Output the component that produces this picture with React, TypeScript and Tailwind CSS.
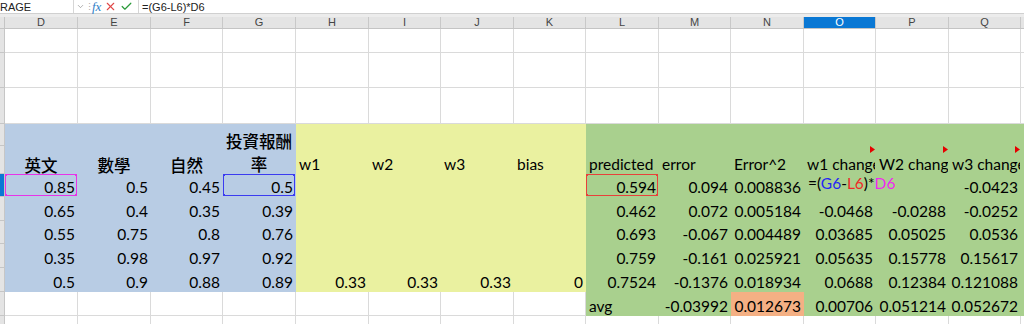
import { Check, ChevronDown, X } from "lucide-react";

type Fill = "w" | "b" | "y" | "g" | "o";
type Cell = {
  t?: string;
  a?: "l" | "r" | "c";
  f: Fill;
  cjk?: boolean;
  wrap?: boolean;
  box?: "m" | "b" | "r";
  tri?: boolean;
  formula?: boolean;
};
type Row = { h: string; sel?: boolean; cells: Cell[] };

const COLS = ["D", "E", "F", "G", "H", "I", "J", "K", "L", "M", "N", "O", "P", "Q"];
const W = [
  "w-[73px]", "w-[73px]", "w-[72px]", "w-[73px]", "w-[73px]", "w-[72px]", "w-[73px]",
  "w-[72px]", "w-[73px]", "w-[72px]", "w-[73px]", "w-[72px]", "w-[73px]", "w-[72px]",
];

const FILL: Record<Fill, string> = {
  w: "bg-white border-[#dadada]",
  b: "bg-[#b8cce4] border-transparent",
  y: "bg-[#eaf1a0] border-transparent",
  g: "bg-[#a9d08e] border-transparent",
  o: "bg-[#f4b084] border-transparent",
};

const BOX = {
  m: { line: "border-[#e833e8]", dot: "bg-[#e833e8]" },
  b: { line: "border-[#3b3bf0]", dot: "bg-[#3b3bf0]" },
  r: { line: "border-[#e8403a]", dot: "bg-[#e8403a]" },
};

const white = (): Cell[] => COLS.map(() => ({ f: "w" as Fill }));

const band = (d: string[], k: string[], l: string[]): Cell[] => [
  ...d.map((t) => ({ t, a: "r" as const, f: "b" as Fill })),
  ...k.map((t) => ({ t, a: "r" as const, f: "y" as Fill })),
  ...l.map((t) => ({ t, a: "r" as const, f: "g" as Fill })),
];

const e4 = ["", "", "", ""];

const row6 = band(["0.85", "0.5", "0.45", "0.5"], e4, ["0.594", "0.094", "0.008836", "", "", "-0.0423"]);
row6[0].box = "m";
row6[3].box = "b";
row6[8].box = "r";
row6[11].formula = true;

const ROWS: Row[] = [
  { h: "h-[24px]", cells: white() },
  { h: "h-[35px]", cells: white() },
  { h: "h-[36px]", cells: white() },
  {
    h: "h-[22px]",
    cells: [
      { f: "b" }, { f: "b" }, { f: "b" }, { f: "b" },
      { f: "y" }, { f: "y" }, { f: "y" }, { f: "y" },
      { f: "g" }, { f: "g" }, { f: "g" }, { f: "g" }, { f: "g" }, { f: "g" },
    ],
  },
  {
    h: "h-[28px]",
    cells: [
      { f: "b", t: "英文", a: "c", cjk: true },
      { f: "b", t: "數學", a: "c", cjk: true },
      { f: "b", t: "自然", a: "c", cjk: true },
      { f: "b", t: "投資報酬率", a: "c", cjk: true, wrap: true },
      { f: "y", t: "w1", a: "l" },
      { f: "y", t: "w2", a: "l" },
      { f: "y", t: "w3", a: "l" },
      { f: "y", t: "bias", a: "l" },
      { f: "g", t: "predicted", a: "l" },
      { f: "g", t: "error", a: "l" },
      { f: "g", t: "Error^2", a: "l" },
      { f: "g", t: "w1 change", a: "l", tri: true },
      { f: "g", t: "W2 change", a: "l", tri: true },
      { f: "g", t: "w3 change", a: "l", tri: true },
    ],
  },
  { h: "h-[23px]", sel: true, cells: row6 },
  { h: "h-[24px]", cells: band(["0.65", "0.4", "0.35", "0.39"], e4, ["0.462", "0.072", "0.005184", "-0.0468", "-0.0288", "-0.0252"]) },
  { h: "h-[23px]", cells: band(["0.55", "0.75", "0.8", "0.76"], e4, ["0.693", "-0.067", "0.004489", "0.03685", "0.05025", "0.0536"]) },
  { h: "h-[24px]", cells: band(["0.35", "0.98", "0.97", "0.92"], e4, ["0.759", "-0.161", "0.025921", "0.05635", "0.15778", "0.15617"]) },
  { h: "h-[24px]", cells: band(["0.5", "0.9", "0.88", "0.89"], ["0.33", "0.33", "0.33", "0"], ["0.7524", "-0.1376", "0.018934", "0.0688", "0.12384", "0.121088"]) },
  {
    h: "h-[24px]",
    cells: [
      { f: "w" }, { f: "w" }, { f: "w" }, { f: "w" }, { f: "w" }, { f: "w" }, { f: "w" }, { f: "w" },
      { f: "g", t: "avg", a: "l" },
      { f: "g", t: "-0.03992", a: "r" },
      { f: "o", t: "0.012673", a: "r" },
      { f: "g", t: "0.00706", a: "r" },
      { f: "g", t: "0.051214", a: "r" },
      { f: "g", t: "0.052672", a: "r" },
    ],
  },
  { h: "h-[24px]", cells: white() },
];

const RefBox = ({ k }: { k: "m" | "b" | "r" }) => (
  <div className={`absolute inset-0 border ${BOX[k].line}`}>
    <span className={`absolute -left-[2px] -top-[2px] w-[3px] h-[3px] ${BOX[k].dot}`} />
    <span className={`absolute -right-[2px] -top-[2px] w-[3px] h-[3px] ${BOX[k].dot}`} />
    <span className={`absolute -left-[2px] -bottom-[2px] w-[3px] h-[3px] ${BOX[k].dot}`} />
    <span className={`absolute -right-[2px] -bottom-[2px] w-[3px] h-[3px] ${BOX[k].dot}`} />
  </div>
);

const SheetCell = ({ c, i }: { c: Cell; i: number }) => {
  const align = c.a === "r" ? "justify-end pr-[2px]" : c.a === "c" ? "justify-center" : "justify-start pl-[3px]";
  const font = c.wrap
    ? "block w-full text-center text-[16.5px] font-medium leading-[23px] relative top-[4px]"
    : c.cjk
      ? "whitespace-nowrap text-[16.5px] font-medium leading-[12px] pb-[1px]"
      : "whitespace-nowrap text-[15.5px] leading-[18px]";
  const clip = c.formula || c.cjk ? "overflow-visible" : "overflow-hidden";
  return (
    <div
      className={`relative shrink-0 h-full flex items-end border-r border-b ${W[i]} ${FILL[c.f]} ${align} ${clip} ${c.formula ? "z-10" : ""}`}
    >
      {c.t && <span className={`text-black ${font}`}>{c.t}</span>}
      {c.formula && (
        <span className="absolute left-[4px] bottom-[4px] whitespace-nowrap text-[15.5px] leading-[18px] text-black">
          =(<span className="text-[#2525f5]">G6</span>-<span className="text-[#f02828]">L6</span>)*<span className="text-[#f028f0]">D6</span>
        </span>
      )}
      {c.box && <RefBox k={c.box} />}
      {c.tri && (
        <svg className="absolute right-0 top-0" width="5" height="7" viewBox="0 0 5 7">
          <polygon points="0,0 5,3.5 0,7" fill="#e60000" />
        </svg>
      )}
    </div>
  );
};

export default function App() {
  return (
    <div
      className="w-[1024px] h-[324px] overflow-hidden bg-white"
      style={{ fontFamily: 'Lato, "Noto Sans CJK TC", sans-serif' }}
    >
      {/* formula bar */}
      <div className="h-[14px] flex items-center bg-white border-b border-[#d0d0d0] text-[11px] leading-[14px] text-[#222] font-['Liberation_Sans',sans-serif]">
        <div className="w-[74px] shrink-0 h-full border-r border-[#d6d6d6] flex items-center">RAGE</div>
        <div className="w-[12px] shrink-0 h-full flex items-center justify-center text-[#777]">
          <ChevronDown size={9} strokeWidth={1.5} />
        </div>
        <div className="w-[6px] shrink-0 h-full flex items-center justify-center text-[#aaa] text-[9px]">⋮</div>
        <div className="w-[46px] shrink-0 h-full flex items-center gap-[3px]">
          <span className="font-['Liberation_Serif',serif] italic text-[13px] leading-[14px] text-[#2f80c8]">fx</span>
          <X size={13} strokeWidth={2} className="shrink-0 text-[#e04848]" />
          <Check size={13} strokeWidth={2.2} className="shrink-0 text-[#2a9a3a]" />
        </div>
        <div className="flex-1 h-full border-l border-[#d6d6d6] pl-[3px] flex items-center">=(G6-L6)*D6</div>
      </div>
      <div className="h-[3px] bg-[#ececec]" />
      {/* column headers */}
      <div className="h-[12px] flex bg-[#e4e4e4] border-b border-[#c4c4c4] text-[11px] leading-[11px] text-[#444] font-['Liberation_Sans',sans-serif]">
        <div className="w-[5px] shrink-0 border-r border-[#c4c4c4]" />
        {COLS.map((l, i) => (
          <div
            key={l}
            className={`shrink-0 ${W[i]} flex items-center justify-center border-r border-[#c8c8c8] ${l === "O" ? "bg-[#0a78d4] text-white" : ""}`}
          >
            {l}
          </div>
        ))}
        <div className="flex-1" />
      </div>
      {/* sheet */}
      {ROWS.map((row, r) => (
        <div key={r} className={`flex ${row.h}`}>
          <div
            className={`w-[5px] shrink-0 h-full border-r border-b border-[#c6c6c6] ${row.sel ? "bg-[#0a78d4]" : "bg-[#e4e4e4]"}`}
          />
          {row.cells.map((c, i) => (
            <SheetCell key={i} c={c} i={i} />
          ))}
          <div className={`flex-1 h-full border-b ${r >= 3 && r <= 10 ? "bg-[#a9d08e] border-transparent" : "bg-white border-[#dadada]"}`} />
        </div>
      ))}
    </div>
  );
}
